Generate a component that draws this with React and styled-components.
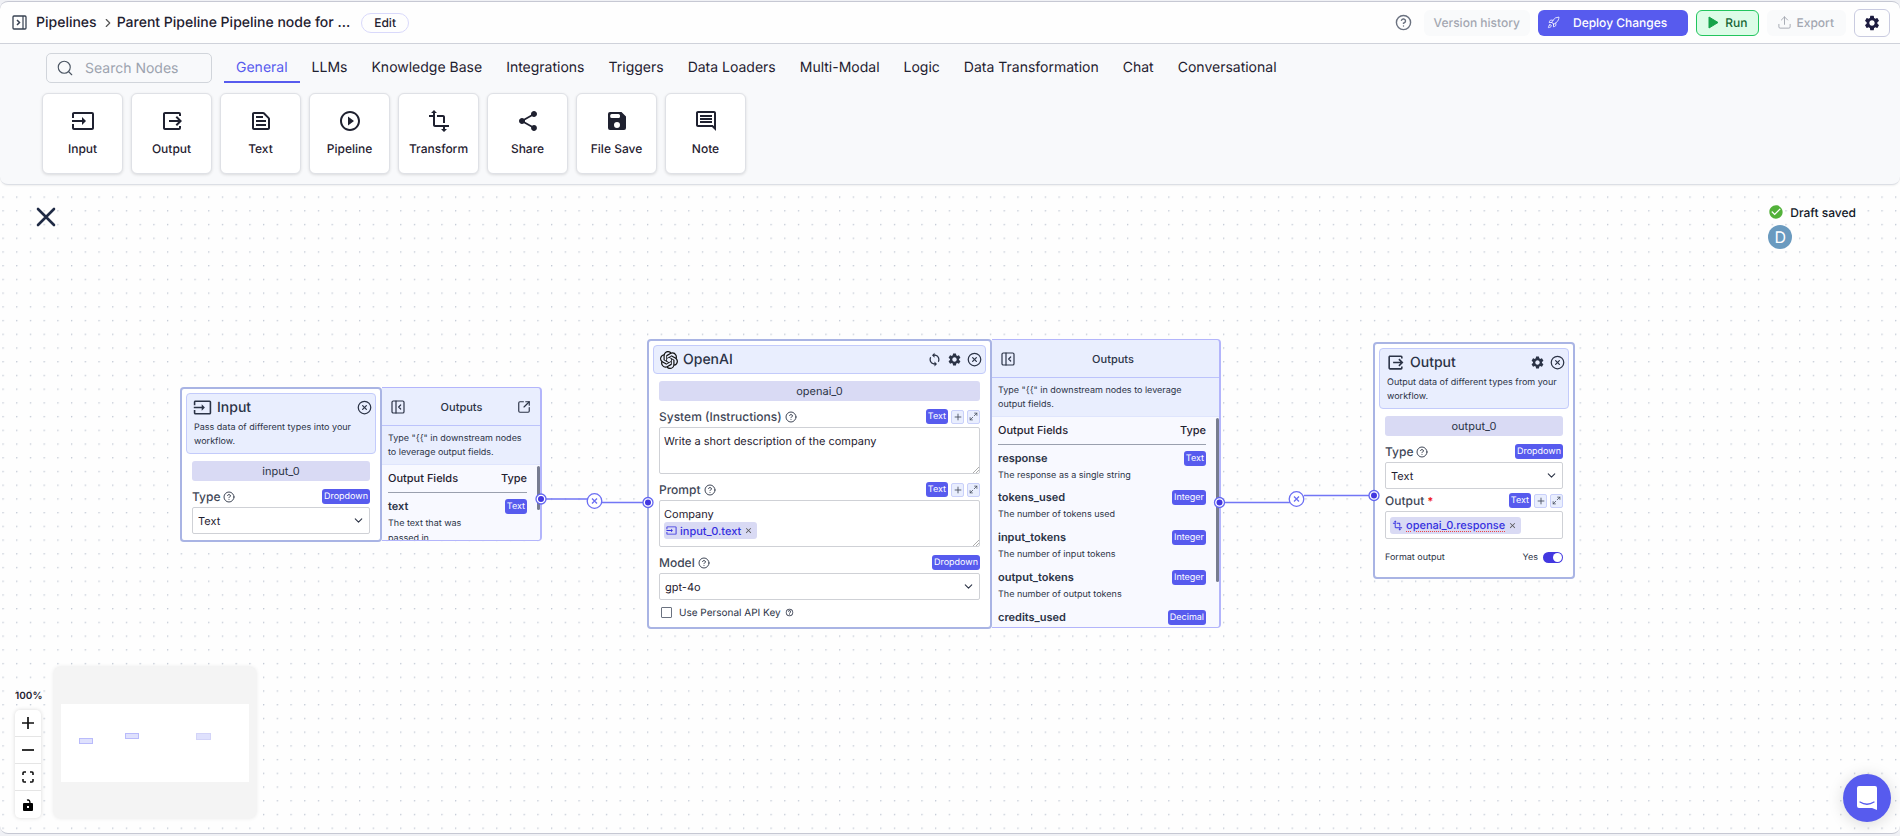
import React from "react";
import styled, { createGlobalStyle } from "styled-components";
import {
  MdClose,
  MdInput,
  MdOutlineComment,
  MdOutlineTextSnippet,
  MdOutput,
  MdPlayCircleOutline,
  MdSettings,
  MdShare,
  MdSync,
  MdTransform,
  MdCheckCircle,
  MdHelpOutline,
} from "react-icons/md";
import { SiOpenai } from "react-icons/si";
import {
  Rocket,
  Search,
  Upload,
  ChevronDown,
  ChevronRight,
  CircleHelp,
  CircleX,
  SquareArrowOutUpRight,
  Maximize2,
  PanelLeftClose,
  Plus,
} from "lucide-react";

const SaveIcon = ({ size }) => (
  <svg width={size} height={size} viewBox="0 0 24 24" fill="currentColor">
    <path
      fillRule="evenodd"
      d="M5 3h11.500L21 7.500V19a2 2 0 0 1-2 2H5a2 2 0 0 1-2-2V5a2 2 0 0 1 2-2zM6.700 5a1.500 1.500 0 0 0-1.500 1.500v1A1.500 1.500 0 0 0 6.700 9h6.800A1.500 1.500 0 0 0 15 7.500v-1A1.500 1.500 0 0 0 13.500 5zM12 13a3 3 0 1 0 0 6 3 3 0 0 0 0-6z"
    />
  </svg>
);

const tabs = [
  "General",
  "LLMs",
  "Knowledge Base",
  "Integrations",
  "Triggers",
  "Data Loaders",
  "Multi-Modal",
  "Logic",
  "Data Transformation",
  "Chat",
  "Conversational",
];

const tiles = [
  { name: "Input", icon: MdInput },
  { name: "Output", icon: MdOutput },
  { name: "Text", icon: MdOutlineTextSnippet },
  { name: "Pipeline", icon: MdPlayCircleOutline },
  { name: "Transform", icon: MdTransform },
  { name: "Share", icon: MdShare },
  { name: "File Save", icon: SaveIcon },
  { name: "Note", icon: MdOutlineComment },
];

const openAiOutputs = [
  { name: "response", type: "Text", about: "The response as a single string" },
  { name: "tokens_used", type: "Integer", about: "The number of tokens used" },
  { name: "input_tokens", type: "Integer", about: "The number of input tokens" },
  {
    name: "output_tokens",
    type: "Integer",
    about: "The number of output tokens",
  },
  { name: "credits_used", type: "Decimal" },
];

const inputOutputs = [
  { name: "text", type: "Text", about: "The text that was passed in" },
];

const FieldLabel = ({ id, text, type, help, required, tools }) => (
  <LabelRow>
    <Label htmlFor={id}>{text}</Label>
    {help && <CircleHelp size={12} />}
    {required && <Required>*</Required>}
    <Spacer />
    <Badge>{type}</Badge>
    {tools && (
      <>
        <ToolButton aria-label={`Add to ${text}`}>
          <Plus size={10} />
        </ToolButton>
        <ToolButton aria-label={`Expand ${text}`}>
          <Maximize2 size={9} />
        </ToolButton>
      </>
    )}
  </LabelRow>
);

const Dropdown = ({ id, value }) => (
  <SelectWrapper>
    <Select id={id} defaultValue={value}>
      <option>{value}</option>
    </Select>
    <ChevronDown size={13} />
  </SelectWrapper>
);

const Grip = () => (
  <GripIcon width="6" height="6" viewBox="0 0 6 6">
    <path d="M0 6 6 0M3 6l3-3" stroke="#8a8a8a" strokeWidth="0.7" />
  </GripIcon>
);

const OutputsPanel = ({ rows, width, height, wide, thumb }) => (
  <Panel $width={width} $height={height}>
    <PanelHead>
      <IconButton aria-label="Collapse outputs">
        <PanelLeftClose size={16} strokeWidth={1.8} />
      </IconButton>
      <PanelTitle>Outputs</PanelTitle>
      {!wide && (
        <IconButton aria-label="Open outputs">
          <SquareArrowOutUpRight size={14} />
        </IconButton>
      )}
    </PanelHead>
    <Hint>Type "{"{{"}" in downstream nodes to leverage output fields.</Hint>
    <PanelBody>
      <OutputTable>
        <thead>
          <tr>
            <th>Output Fields</th>
            <th>Type</th>
          </tr>
        </thead>
        <tbody>
          {rows.map((row) => (
            <tr key={row.name}>
              <td>
                <FieldName>{row.name}</FieldName>
                <FieldAbout $wide={wide}>{row.about}</FieldAbout>
              </td>
              <td>
                <Badge>{row.type}</Badge>
              </td>
            </tr>
          ))}
        </tbody>
      </OutputTable>
      <Thumb $height={thumb} />
    </PanelBody>
  </Panel>
);

const Handle = ({ x, y }) => (
  <g>
    <circle cx={x} cy={y} r="5" fill="#fff" stroke="#6366f1" strokeWidth="1.3" />
    <circle cx={x} cy={y} r="3" fill="#4338e0" stroke="none" />
  </g>
);

const Cut = ({ x, y }) => (
  <g stroke="#6b6ef3" strokeWidth="1.3" fill="#fff">
    <circle cx={x} cy={y} r="7.3" />
    <path d={`M${x - 2.5} ${y - 2.5}l5 5m0-5l-5 5`} />
  </g>
);

const App = () => (
  <Shell>
    <GlobalStyle />
    <TopBar>
      <IconButton aria-label="Toggle sidebar">
        <svg width="15" height="15" viewBox="0 0 15 15" fill="none" stroke="#374151">
          <rect x="1" y="1" width="13" height="13" rx="1" strokeWidth="1.3" />
          <path d="M11 1v13" strokeWidth="1.2" />
          <path d="M5 5l2.500 2.500L5 10" strokeWidth="1.500" />
        </svg>
      </IconButton>
      <Crumb href="#pipelines">Pipelines</Crumb>
      <ChevronRight size={14} color="#555" />
      <Title>Parent Pipeline Pipeline node for ...</Title>
      <EditButton>Edit</EditButton>
      <Spacer />
      <Actions>
        <IconButton aria-label="Help">
          <CircleHelp size={17} color="#6b7280" />
        </IconButton>
        <VersionButton disabled>Version history</VersionButton>
        <DeployButton>
          <Rocket size={13} strokeWidth={1.5} />
          Deploy Changes
        </DeployButton>
        <RunButton>
          <svg width="11" height="13" viewBox="0 0 11 13">
            <path d="M1 1v11l9-5.500z" fill="#16a34a" stroke="#16a34a" strokeLinejoin="round" />
          </svg>
          Run
        </RunButton>
        <ExportButton disabled>
          <Upload size={15} strokeWidth={1.5} />
          Export
        </ExportButton>
        <SettingsButton aria-label="Settings">
          <MdSettings size={18} />
        </SettingsButton>
      </Actions>
    </TopBar>

    <Library>
      <TabRow>
        <SearchBox>
          <Search size={18} strokeWidth={1.5} />
          <input aria-label="Search Nodes" placeholder="Search Nodes" />
        </SearchBox>
        <Tabs>
          {tabs.map((tab) => (
            <Tab key={tab} $active={tab === "General"}>
              {tab}
            </Tab>
          ))}
        </Tabs>
      </TabRow>
      <Tiles>
        {tiles.map(({ name, icon: Icon }) => (
          <Tile key={name}>
            <Icon size={24} />
            {name}
          </Tile>
        ))}
      </Tiles>
    </Library>

    <Canvas>
      <Dots>
        <pattern
          id="dots"
          x="2.400"
          y="-2.300"
          width="13.715"
          height="13.72"
          patternUnits="userSpaceOnUse"
        >
          <circle cx="0.7" cy="0.7" r="0.7" fill="#b4bccb" />
        </pattern>
        <rect width="100%" height="100%" fill="url(#dots)" />
      </Dots>

      <Node $x={180} $y={202}>
        <Card $width={202} $height={155}>
          <CardHead>
            <CardTitleRow>
              <MdInput size={19} />
              <CardTitle>Input</CardTitle>
              <Spacer />
              <IconButton aria-label="Remove Input">
                <CircleX size={15} />
              </IconButton>
            </CardTitleRow>
            <CardAbout>Pass data of different types into your workflow.</CardAbout>
          </CardHead>
          <CardBody>
            <NodeName>input_0</NodeName>
            <Field>
              <FieldLabel id="input-type" text="Type" type="Dropdown" help />
              <Dropdown id="input-type" value="Text" />
            </Field>
          </CardBody>
        </Card>
        <OutputsPanel rows={inputOutputs} width={160} height={154} thumb={44} />
      </Node>

      <Node $x={647} $y={154}>
        <Card $width={345} $height={290}>
          <CardHead>
            <CardTitleRow>
              <SiOpenai size={18} color="#111" />
              <CardTitle>OpenAI</CardTitle>
              <Spacer />
              <IconButton aria-label="Refresh OpenAI">
                <MdSync size={15} />
              </IconButton>
              <IconButton aria-label="OpenAI settings">
                <MdSettings size={15} />
              </IconButton>
              <IconButton aria-label="Remove OpenAI">
                <CircleX size={15} />
              </IconButton>
            </CardTitleRow>
          </CardHead>
          <CardBody>
            <NodeName>openai_0</NodeName>
            <Field>
              <FieldLabel id="system" text="System (Instructions)" type="Text" help tools />
              <TextBox>
                <textarea id="system" defaultValue="Write a short description of the company" />
                <Grip />
              </TextBox>
            </Field>
            <Field>
              <FieldLabel id="prompt" text="Prompt" type="Text" help tools />
              <TextBox>
                <textarea id="prompt" rows={1} defaultValue="Company" />
                <Token>
                  <MdInput size={11} />
                  input_0.text
                  <button aria-label="Remove input_0.text">
                    <MdClose size={9} />
                  </button>
                </Token>
                <Grip />
              </TextBox>
            </Field>
            <Field>
              <FieldLabel id="model" text="Model" type="Dropdown" help />
              <Dropdown id="model" value="gpt-4o" />
            </Field>
            <CheckRow>
              <input type="checkbox" />
              Use Personal API Key
              <MdHelpOutline size={9} />
            </CheckRow>
          </CardBody>
        </Card>
        <OutputsPanel rows={openAiOutputs} width={229} height={289} thumb={164} wide />
      </Node>

      <Node $x={1373} $y={157}>
        <Card $width={202} $height={237}>
          <CardHead>
            <CardTitleRow>
              <MdOutput size={19} />
              <CardTitle>Output</CardTitle>
              <Spacer />
              <IconButton aria-label="Output settings">
                <MdSettings size={15} />
              </IconButton>
              <IconButton aria-label="Remove Output">
                <CircleX size={15} />
              </IconButton>
            </CardTitleRow>
            <CardAbout>Output data of different types from your workflow.</CardAbout>
          </CardHead>
          <CardBody>
            <NodeName>output_0</NodeName>
            <FieldGroup>
              <Field>
                <FieldLabel id="output-type" text="Type" type="Dropdown" help />
                <Dropdown id="output-type" value="Text" />
              </Field>
              <Field>
                <FieldLabel id="output" text="Output" type="Text" required tools />
                <TokenInput>
                  <Token>
                    <MdTransform size={11} />
                    <span>openai_0.response</span>
                    <button aria-label="Remove openai_0.response">
                      <MdClose size={9} />
                    </button>
                  </Token>
                  <input id="output" />
                </TokenInput>
              </Field>
              <SwitchRow>
                <label htmlFor="format">Format output</label>
                <Spacer />
                Yes
                <Switch id="format" type="checkbox" defaultChecked />
              </SwitchRow>
            </FieldGroup>
          </CardBody>
        </Card>
      </Node>

      <Edges>
        <path d="M541 314H594V316.500M594 317.500H647" />
        <path d="M1220 317.500H1290M1304 310.500H1373" />
        <Handle x={541} y={314} />
        <Cut x={594.5} y={316} />
        <Handle x={648} y={317.5} />
        <Handle x={1219.5} y={317.5} />
        <Cut x={1296.5} y={314} />
        <Handle x={1374} y={310.5} />
      </Edges>

      <CloseButton aria-label="Close library">
        <svg width="20" height="20" viewBox="0 0 20 20" stroke="#1f2a44" strokeWidth="2.600" strokeLinecap="round">
          <path d="M2 2l16 16M18 2L2 18" />
        </svg>
      </CloseButton>

      <Status>
        <Saved>
          <MdCheckCircle size={16} />
          Draft saved
        </Saved>
        <Avatar>D</Avatar>
      </Status>

      <Corner>
        <Zoom>
          100%
          <ZoomStack>
            <button aria-label="Zoom in">
              <svg width="12" height="12" viewBox="0 0 12 12">
                <path d="M6 0v12M0 6h12" stroke="#111" strokeWidth="1.700" />
              </svg>
            </button>
            <button aria-label="Zoom out">
              <svg width="12" height="12" viewBox="0 0 12 12">
                <path d="M0 6h12" stroke="#111" strokeWidth="1.700" />
              </svg>
            </button>
            <button aria-label="Fit view">
              <svg width="12" height="12" viewBox="0 0 12 12" fill="none">
                <path
                  d="M1 4V2q0-1 1-1h2M8 1h2q1 0 1 1v2M11 8v2q0 1-1 1H8M4 11H2q-1 0-1-1V8"
                  stroke="#111"
                  strokeWidth="1.600"
                />
              </svg>
            </button>
            <button aria-label="Lock">
              <svg width="12" height="12" viewBox="0 0 12 12" fill="none">
                <rect x="1" y="4" width="10" height="8" rx="1" fill="#000" />
                <rect x="5" y="7" width="2" height="2" fill="#fff" />
                <path d="M5 1.200q3-1 3 3" stroke="#000" strokeWidth="1.300" />
              </svg>
            </button>
          </ZoomStack>
        </Zoom>
        <MiniMap>
          <svg width="202" height="151" viewBox="0 0 202 151">
            <rect x="7" y="37" width="188" height="78" fill="#fff" />
            <g fill="#dfe1fd" stroke="#b9bbfb">
              <rect x="25.500" y="71.500" width="13" height="5" />
              <rect x="71.500" y="66.500" width="13" height="5" />
              <rect x="142.500" y="66.500" width="14" height="6" stroke="#d3d4f8" />
            </g>
          </svg>
        </MiniMap>
      </Corner>

      <Chat aria-label="Open chat">
        <svg width="24" height="26" viewBox="0 0 24 26">
          <path d="M4 1h16q2 0 2 2v22l-5-2H4q-2 0-2-2V3q0-2 2-2z" fill="#fff" />
          <path
            d="M5 17q7 4.500 14 0"
            fill="none"
            stroke="#575bee"
            strokeWidth="1.300"
            strokeLinecap="round"
          />
        </svg>
      </Chat>
    </Canvas>
  </Shell>
);

const GlobalStyle = createGlobalStyle`
  * {
    box-sizing: border-box;
  }

  body {
    margin: 0;
    background: #f0f1f5;
    color: #1f2130;
    font-family: Inter, "Liberation Sans", sans-serif;
    font-size: 14px;
    text-rendering: geometricPrecision;
  }

  button,
  input,
  select,
  textarea {
    font: inherit;
    color: inherit;
    text-rendering: inherit;
    padding: 0;
    margin: 0;
    border: none;
    background: none;
    outline: none;
  }

  svg {
    flex: none;
  }
`;

const Shell = styled.div`
  display: flex;
  flex-direction: column;
  height: calc(100vh - 3px);
  margin: 1px 0 2px;
  border: 1px solid #c6c8d3;
  border-width: 1px 0;
  border-radius: 8px;
  background: #fefefe;
  overflow: hidden;
`;

const Spacer = styled.div`
  flex: 1;
`;

const TopBar = styled.header`
  display: flex;
  align-items: center;
  height: 42px;
  padding: 0 10px 0 12px;
  border-bottom: 1px solid #cfd2da;
  font-weight: 500;
`;

const IconButton = styled.button`
  display: flex;
`;

const Crumb = styled.a`
  margin: 0 4px 0 9px;
  color: inherit;
  text-decoration: none;
`;

const Title = styled.span`
  margin-left: 2px;
`;

const EditButton = styled.button`
  height: 24px;
  height: 20px;
  margin-left: 11px;
  padding: 0 12px;
  border: 1px solid #d9d9fb;
  border-radius: 10px;
  font-size: 12px;
  line-height: 18px;
`;

const Actions = styled.div`
  display: flex;
  align-items: center;
  gap: 8px;
`;

const BarButton = styled.button`
  display: flex;
  align-items: center;
  gap: 4px;
  height: 26px;
  padding: 0 11px;
  border-radius: 6px;
  font-size: 12px;
`;

const MutedButton = styled(BarButton)`
  background: #f9fafb;
  color: #a3a7b1;
`;

const VersionButton = styled(MutedButton)`
  margin-left: 4px;
  padding: 0 10px;
`;

const ExportButton = styled(MutedButton)`
  padding: 0 12px 0 10px;
`;

const DeployButton = styled(BarButton)`
  gap: 13px;
  padding: 0 21px 0 9px;
  background: #575bee;
  color: #fff;
`;

const RunButton = styled(BarButton)`
  gap: 6px;
  border: 1px solid #22c55e;
  background: #dcfce7;
  color: #166534;
`;

const SettingsButton = styled(BarButton)`
  height: 28px;
  padding: 0 8px;
  border: 1px solid #c9cbe0;
  color: #1c1b3f;
`;

const Library = styled.section`
  height: 141px;
  padding: 9px 42px 0;
  border-bottom: 1px solid #dcdfe5;
  border-radius: 0 0 8px 8px;
  background: #f8f9fb;
  box-shadow: 0 1px 2px rgba(0, 0, 0, 0.06);
  z-index: 1;
`;

const TabRow = styled.div`
  display: flex;
  gap: 12px;
  padding-left: 4px;
`;

const SearchBox = styled.label`
  display: flex;
  align-items: center;
  gap: 11px;
  width: 166px;
  height: 30px;
  padding: 0 9px;
  border: 1px solid #d1d5db;
  border-radius: 5px;
  color: #4b5563;

  input {
    width: 110px;
  }

  input::placeholder {
    color: #9ca3af;
  }
`;

const Tabs = styled.nav`
  display: flex;
`;

const Tab = styled.button`
  height: 30px;
  padding: 0 12px;
  border-bottom: 2px solid ${({ $active }) => ($active ? "#575bee" : "transparent")};
  color: ${({ $active }) => ($active ? "#575bee" : "#1f2130")};
  font-weight: 400;
`;

const Tiles = styled.div`
  display: flex;
  gap: 8px;
  margin-top: 10px;
`;

const Tile = styled.button`
  display: flex;
  flex-direction: column;
  align-items: center;
  gap: 8px;
  width: 81px;
  height: 81px;
  padding-top: 15px;
  border: 1px solid #dfe1e6;
  border-radius: 6px;
  background: #fff;
  box-shadow: 0 1px 3px rgba(0, 0, 0, 0.12);
  font-size: 12px;
  font-weight: 500;
`;

const Canvas = styled.main`
  position: relative;
  flex: 1;
  overflow: hidden;
`;

const Dots = styled.svg`
  position: absolute;
  width: 100%;
  height: 100%;
`;

const Edges = styled.svg`
  position: absolute;
  width: 100%;
  height: 100%;
  pointer-events: none;
  fill: none;
  stroke: #7276f5;
  stroke-width: 1.5;
`;

const Node = styled.div`
  position: absolute;
  left: ${({ $x }) => $x}px;
  top: ${({ $y }) => $y}px;
  display: flex;
  color: #2b3346;
  font-size: 11px;
`;

const Card = styled.article`
  width: ${({ $width }) => $width}px;
  height: ${({ $height }) => $height}px;
  padding: 4px;
  border: 2px solid #a9b4e4;
  border-radius: 4px;
  background: #fff;
`;

const CardHead = styled.header`
  padding: 0 3px 0 6px;
  border: 1px solid #c3cbfb;
  border-radius: 4px;
  background: #e9eefe;
`;

const CardTitleRow = styled.div`
  display: flex;
  align-items: center;
  gap: 5px;
  height: 27px;
`;

const CardTitle = styled.h2`
  margin: 0;
  font-size: 14px;
  font-weight: 500;
`;

const CardAbout = styled.p`
  margin: 0;
  padding: 0 0 4px 1px;
  font-size: 9px;
  line-height: 14px;
`;

const CardBody = styled.div`
  display: flex;
  flex-direction: column;
  gap: 8px;
  padding: 7px 6px 0;
`;

const NodeName = styled.div`
  height: 20px;
  border-radius: 3px;
  background: #d9daf4;
  line-height: 20px;
  text-align: center;
`;

const Field = styled.div`
  display: flex;
  flex-direction: column;
  gap: 3px;
`;

const FieldGroup = styled.div`
  display: flex;
  flex-direction: column;
  gap: 4px;
`;

const LabelRow = styled.div`
  display: flex;
  align-items: center;
  gap: 3px;
  height: 15px;
  color: #3f4757;
`;

const Label = styled.label`
  font-size: 12px;
  font-weight: 500;
`;

const Required = styled.span`
  color: #ef1c1c;
  font-weight: 700;
`;

const Badge = styled.span`
  display: inline-block;
  height: 15px;
  padding: 0 2px;
  border-radius: 3px;
  background: #575bee;
  color: #fff;
  font-size: 9px;
  line-height: 15px;
`;

const ToolButton = styled.button`
  display: flex;
  align-items: center;
  justify-content: center;
  width: 13px;
  height: 14px;
  border: 1px solid #c9d0fa;
  border-radius: 2px;
  background: #e9eefe;
`;

const SelectWrapper = styled.div`
  display: grid;
  align-items: center;

  > * {
    grid-area: 1 / 1;
  }

  svg {
    justify-self: end;
    margin-right: 5px;
    pointer-events: none;
  }
`;

const Select = styled.select`
  appearance: none;
  height: 27px;
  padding: 0 5px;
  border: 1px solid #cfd1d6;
  border-radius: 2px;
  color: #1f2130;
`;

const TextBox = styled.div`
  position: relative;
  height: 47px;
  padding: 6px 4px;
  border: 1px solid #cfd1d6;
  border-radius: 2px;
  color: #1f2130;

  textarea {
    display: block;
    width: 100%;
    line-height: 15px;
    resize: none;
    overflow: hidden;
  }
`;

const GripIcon = styled.svg`
  position: absolute;
  right: 0;
  bottom: 0;
`;

const Token = styled.span`
  display: inline-flex;
  align-items: center;
  gap: 3px;
  height: 17px;
  padding: 0 4px 0 2px;
  border-radius: 3px;
  background: #d9daf4;
  color: #352fe0;
  font-weight: 500;
  white-space: nowrap;

  span {
    text-decoration: underline dotted #ef4444 1px;
    text-underline-offset: 2px;
  }

  button {
    display: flex;
    color: #555;
  }
`;

const TokenInput = styled.div`
  display: flex;
  align-items: center;
  height: 28px;
  padding: 0 4px;
  border: 1px solid #cfd1d6;
  border-radius: 2px;

  input {
    flex: 1;
    min-width: 0;
  }
`;

const CheckRow = styled.label`
  display: flex;
  align-items: center;
  gap: 4px;
  height: 9px;
  padding-left: 2px;
  font-size: 10px;

  input {
    appearance: none;
    width: 11px;
    height: 11px;
    margin-right: 3px;
    border: 1px solid #6b7280;
    border-radius: 1px;
  }
`;

const SwitchRow = styled.div`
  display: flex;
  align-items: center;
  gap: 5px;
  height: 29px;
  font-size: 9px;
`;

const Switch = styled.input`
  appearance: none;
  display: flex;
  justify-content: flex-end;
  width: 20px;
  height: 11px;
  padding: 1px;
  border-radius: 6px;
  background: #4338e0;

  &::after {
    content: "";
    width: 9px;
    height: 9px;
    border-radius: 50%;
    background: #fff;
  }
`;

const Panel = styled.aside`
  display: flex;
  flex-direction: column;
  width: ${({ $width }) => $width}px;
  height: ${({ $height }) => $height}px;
  border: 1px solid #b3b5fb;
  border-left: none;
  border-right-width: 2px;
  border-radius: 0 4px 4px 0;
  background: #e9eefe;
  overflow: hidden;
`;

const PanelHead = styled.header`
  display: flex;
  align-items: center;
  height: 38px;
  flex: none;
  padding: 0 9px 0 8px;
  border-bottom: 1px solid #bcc3fb;
`;

const PanelTitle = styled.h3`
  flex: 1;
  margin: 0;
  font-size: 11px;
  font-weight: 500;
  text-align: center;
`;

const Hint = styled.p`
  margin: 0;
  padding: 6px 14px 4px 6px;
  border-bottom: 1px solid #dfe5fd;
  font-size: 9px;
  line-height: 14px;
`;

const PanelBody = styled.div`
  position: relative;
  flex: 1;
  padding: 0 13px 0 6px;
  background: #f8f9ff;
  overflow: hidden;
`;

const OutputTable = styled.table`
  width: 100%;
  border-collapse: collapse;

  th {
    height: 27px;
    padding: 0;
    border-bottom: 1px solid #9aa0ae;
    color: #1f2130;
    font-weight: 500;
    text-align: left;
  }

  td {
    height: 40px;
    padding: 6px 0 0;
    vertical-align: top;
  }

  th:last-child,
  td:last-child {
    text-align: right;
  }

  td:last-child {
    padding-top: 5px;
  }
`;

const FieldName = styled.div`
  font-weight: 600;
  line-height: 15px;
`;

const FieldAbout = styled.div`
  max-width: ${({ $wide }) => ($wide ? 160 : 90)}px;
  padding-top: 2px;
  font-size: 9px;
  line-height: 15px;
`;

const Thumb = styled.div`
  position: absolute;
  top: 1px;
  right: 0;
  width: 3px;
  height: ${({ $height }) => $height}px;
  border-radius: 2px;
  background: #777c90;
`;

const CloseButton = styled.button`
  position: absolute;
  left: 36px;
  top: 22px;
  display: flex;
`;

const Status = styled.div`
  position: absolute;
  top: 19px;
  right: 44px;
`;

const Saved = styled.div`
  display: flex;
  align-items: center;
  gap: 6px;
  color: #111827;
  font-size: 12px;
  font-weight: 500;

  svg {
    color: #52b13a;
  }
`;

const Avatar = styled.div`
  width: 24px;
  height: 24px;
  margin-top: 5px;
  border-radius: 50%;
  background: #6a9abf;
  color: #fff;
  font-size: 16px;
  line-height: 24px;
  text-align: center;
`;

const Corner = styled.div`
  position: absolute;
  left: 15px;
  bottom: 15px;
  display: flex;
  align-items: flex-end;
  gap: 13px;
`;

const Zoom = styled.div`
  display: flex;
  flex-direction: column;
  gap: 8px;
  width: 26px;
  font-size: 10px;
  font-weight: 600;
`;

const ZoomStack = styled.div`
  border-radius: 5px;
  background: #fff;
  box-shadow: 0 0 4px rgba(0, 0, 0, 0.15);

  button {
    display: flex;
    align-items: center;
    justify-content: center;
    width: 100%;
    height: 27px;
    border-bottom: 1px solid #e5e5e5;
  }

  button:last-child {
    border-bottom: none;
  }
`;

const MiniMap = styled.div`
  display: flex;
  border-radius: 6px;
  background: #f4f4f4;
  box-shadow: 0 0 4px rgba(0, 0, 0, 0.1);
`;

const Chat = styled.button`
  position: absolute;
  right: 9px;
  bottom: 11px;
  display: flex;
  align-items: center;
  justify-content: center;
  width: 48px;
  height: 48px;
  border-radius: 50%;
  background: #575bee;
  box-shadow: 0 2px 16px rgba(0, 0, 0, 0.15);
`;

export default App;
